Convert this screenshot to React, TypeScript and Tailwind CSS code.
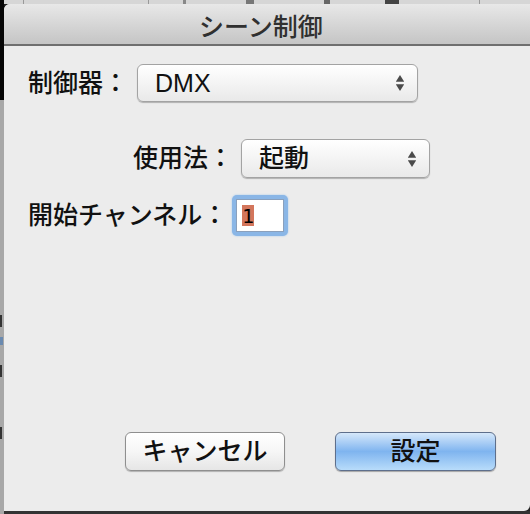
import React from "react";

function Arrows() {
  return (
    <svg width="10" height="18" viewBox="0 0 10 18" className="shrink-0">
      <path d="M5 1 L9.2 7.8 L0.8 7.8 Z" fill="#4a4a4a" />
      <path d="M5 17 L9.2 10.2 L0.8 10.2 Z" fill="#4a4a4a" />
    </svg>
  );
}

function Popup({ label, w, h }: { label: string; w: string; h: string }) {
  return (
    <div
      className={`${w} ${h} flex items-center justify-between pl-[17px] pr-[12px] rounded-[6px] border border-[#a3a3a3] bg-gradient-to-b from-[#ffffff] via-[#f4f4f4] to-[#e9e9e9] shadow-[0_1px_1px_rgba(0,0,0,0.25)]`}
    >
      <span className="text-[25px] leading-none text-[#111] font-medium">{label}</span>
      <Arrows />
    </div>
  );
}

export default function App() {
  return (
    <div className="w-[530px] h-[514px] overflow-hidden flex bg-[#222] font-['Liberation_Sans','Noto_Sans_CJK_JP',sans-serif]">
      {/* left strip of background */}
      <div className="w-[4px] flex flex-col shrink-0">
        <div className="h-[100px] bg-[#050505]" />
        <div className="flex-1 bg-[#a8a8a8] flex flex-col">
          <div className="h-[215px]" />
          <div className="h-[12px] w-[2px] bg-[#333]" />
          <div className="h-[10px]" />
          <div className="h-[8px] w-[3px] bg-[#6a8ab0]" />
          <div className="h-[20px]" />
          <div className="h-[12px] w-[2px] bg-[#333]" />
          <div className="h-[50px]" />
          <div className="h-[12px] w-[2px] bg-[#333]" />
        </div>
      </div>
      <div className="flex-1 flex flex-col">
        {/* top strip of background */}
        <div className="h-[4px] bg-[#d6d6d6] flex">
          <div className="w-[19px]" />
          <div className="w-px bg-[#999]" />
          <div className="w-[124px]" />
          <div className="w-px bg-[#999]" />
          <div className="w-[34px]" />
          <div className="w-[3px] bg-[#888]" />
          <div className="w-[60px]" />
          <div className="w-[8px] bg-[#777]" />
          <div className="w-[70px]" />
          <div className="w-[6px] bg-[#666]" />
          <div className="w-[55px]" />
          <div className="w-[14px] bg-[#444]" />
          <div className="w-[80px]" />
          <div className="w-px bg-[#999]" />
        </div>
        {/* window */}
        <div className="h-[507px] flex flex-col bg-[#ececec] rounded-tl-[6px] rounded-br-[6px] overflow-hidden">
          <div className="h-[42px] shrink-0 flex items-center justify-center pt-[3px] bg-gradient-to-b from-[#e8e8e8] to-[#c5c5c5] border-b-[2px] border-[#6f6f6f]">
            <span className="text-[25px] leading-none text-[#303030] font-medium font-['Noto_Sans_CJK_JP',sans-serif] -ml-[12px]">
              シーン制御
            </span>
          </div>
          <div className="flex-1 flex flex-col pl-[24px]">
            <div className="mt-[18px] flex items-center">
              <span className="text-[25px] leading-none text-[#111] font-medium w-[109px]">制御器：</span>
              <Popup label="DMX" w="w-[281px]" h="h-[38px]" />
            </div>
            <div className="mt-[37px] flex items-center pl-[105px]">
              <span className="text-[25px] leading-none text-[#111] font-medium w-[108px]">使用法：</span>
              <Popup label="起動" w="w-[189px]" h="h-[39px]" />
            </div>
            <div className="mt-[17px] flex items-center">
              <span className="text-[25px] leading-none text-[#111] font-medium w-[204px]">開始チャンネル：</span>
              <div className="w-[56px] h-[41px] rounded-[5px] bg-[#8ab6e6] p-[4px] shadow-[0_0_2px_#9cc4ec]">
                <div className="w-full h-full bg-white border border-[#8aa0bc] flex items-center pl-[5px]">
                  <span className="w-[12px] h-[21px] bg-[#d3765c] flex items-center justify-center text-[20px] leading-none text-black font-['DejaVu_Sans_Mono',monospace]">
                    1
                  </span>
                </div>
              </div>
            </div>
            <div className="mt-[196px] flex items-center pl-[97px]">
              <button className="w-[160px] h-[39px] rounded-[6px] border border-[#8f8f8f] bg-gradient-to-b from-[#ffffff] via-[#f6f6f6] to-[#e6e6e6] shadow-[0_1px_1px_rgba(0,0,0,0.25)] flex items-center justify-center">
                <span className="text-[25px] leading-none text-[#111] font-medium">キャンセル</span>
              </button>
              <div className="w-[50px]" />
              <button className="w-[161px] h-[39px] rounded-[6px] border border-[#5e6f8c] bg-gradient-to-b from-[#d6e8fa] via-[#7fb4ef] to-[#b8dcfa] shadow-[0_1px_1px_rgba(0,0,0,0.3)] flex items-center justify-center">
                <span className="text-[25px] leading-none text-[#111] font-medium">設定</span>
              </button>
            </div>
          </div>
        </div>
        <div className="flex-1 bg-[#333]" />
      </div>
    </div>
  );
}
